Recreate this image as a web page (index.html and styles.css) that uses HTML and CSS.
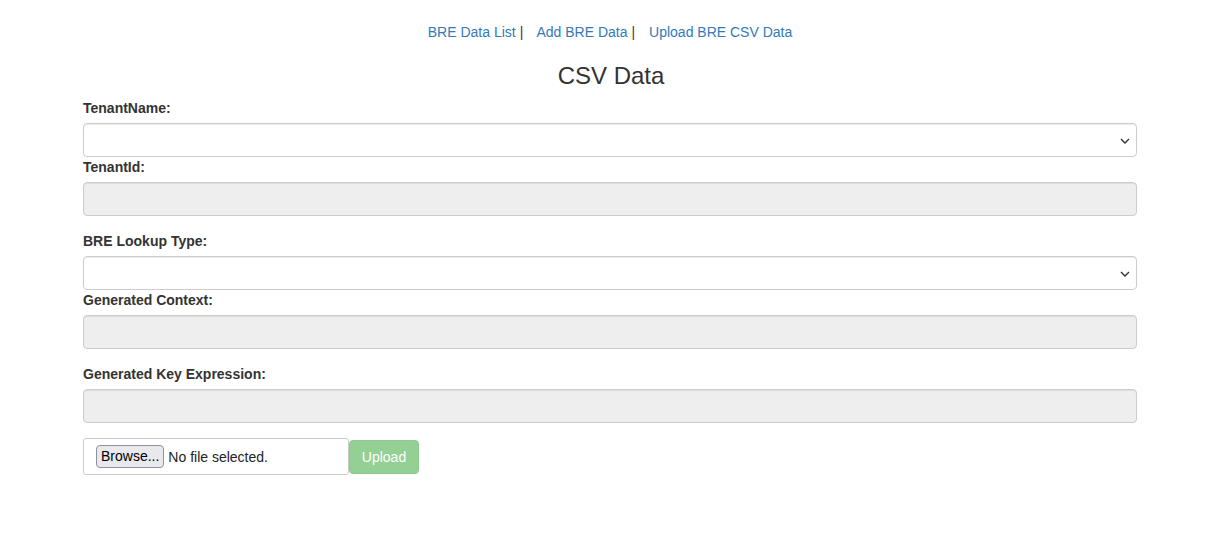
FILE: index.html
```html
<!DOCTYPE html>
<html>
<head>
<meta charset="utf-8">
<link rel="stylesheet" href="styles.css">
</head>
<body>
<div class="page">
  <nav class="topnav">
    <a href="#">BRE Data List</a><span class="sep">|</span>
    <a href="#">Add BRE Data</a><span class="sep">|</span>
    <a href="#">Upload BRE CSV Data</a>
  </nav>
  <h3 class="title">CSV Data</h3>
  <form class="form">
    <div class="group tight">
      <label class="lbl">TenantName:</label>
      <div class="select"><svg class="chev" width="10" height="6" viewBox="0 0 10 6"><path d="M1 1l4 4 4-4" fill="none" stroke="#333" stroke-width="1.4"/></svg></div>
    </div>
    <div class="group">
      <label class="lbl">TenantId:</label>
      <div class="input disabled"></div>
    </div>
    <div class="group tight">
      <label class="lbl">BRE Lookup Type:</label>
      <div class="select"><svg class="chev" width="10" height="6" viewBox="0 0 10 6"><path d="M1 1l4 4 4-4" fill="none" stroke="#333" stroke-width="1.4"/></svg></div>
    </div>
    <div class="group">
      <label class="lbl">Generated Context:</label>
      <div class="input disabled"></div>
    </div>
    <div class="group">
      <label class="lbl">Generated Key Expression:</label>
      <div class="input disabled"></div>
    </div>
    <div class="upload-row">
      <div class="file">
        <span class="browse">Browse...</span>
        <span class="nofile">No file selected.</span>
      </div>
      <span class="btn-upload">Upload</span>
    </div>
  </form>
</div>
</body>
</html>
```
FILE: styles.css
```css
html, body {
  margin: 0;
  padding: 0;
  background: #fff;
}
body {
  font-family: "Liberation Sans", Arial, sans-serif;
  font-size: 14px;
  line-height: 20px;
  color: #333;
}
.page {
  padding: 22px 77px 0 83px;
}
.topnav {
  text-align: center;
  height: 20px;
}
.topnav a {
  color: #337ab7;
  text-decoration: none;
}
.sep {
  color: #5a2a2a;
  margin: 0 10px 0 4px;
}
.title {
  font-size: 24px;
  font-weight: 500;
  line-height: 26px;
  text-align: center;
  margin: 21px 0 9px 2px;
  color: #333;
}
.form {
  display: flex;
  flex-direction: column;
}
.group {
  display: flex;
  flex-direction: column;
  margin-bottom: 15px;
}
.group.tight {
  margin-bottom: 0;
}
.lbl {
  display: block;
  font-weight: bold;
  margin-bottom: 5px;
  height: 20px;
}
.select, .input {
  box-sizing: border-box;
  height: 34px;
  border: 1px solid #ccc;
  border-radius: 4px;
  background: #fff;
  box-shadow: inset 0 1px 1px rgba(0,0,0,.075);
  display: flex;
  align-items: center;
  justify-content: flex-end;
}
.input.disabled {
  background: #eee;
}
.chev {
  margin-right: 6px;
  margin-top: 2px;
}
.upload-row {
  display: flex;
  align-items: center;
}
.file {
  box-sizing: border-box;
  width: 266px;
  height: 37px;
  border: 1px solid #ccc;
  border-radius: 3px;
  display: flex;
  align-items: center;
  padding-left: 12px;
}
.browse {
  box-sizing: border-box;
  height: 23px;
  line-height: 21px;
  padding: 0 4px 0 4px;
  border: 1px solid #8f8f9d;
  border-radius: 4px;
  background: #e9e9ed;
  color: #000;
}
.nofile {
  margin-left: 4px;
  color: #222;
}
.btn-upload {
  box-sizing: border-box;
  width: 70px;
  height: 34px;
  line-height: 32px;
  text-align: center;
  color: #fff;
  background: #5cb85c;
  border: 1px solid #4cae4c;
  border-radius: 4px;
  opacity: .65;
}
```
